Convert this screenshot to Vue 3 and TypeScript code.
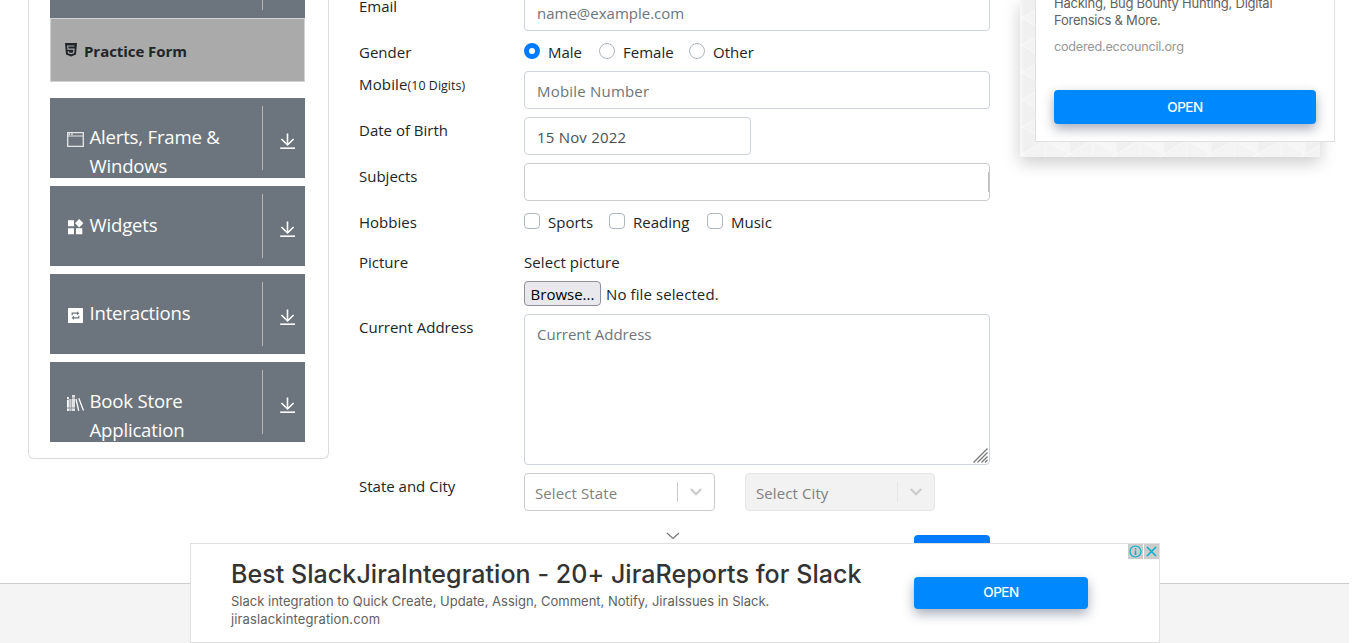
<script setup lang="ts">
interface Group {
  lines: string[]
  icon: 'window' | 'widgets' | 'repeat' | 'books'
}

const groups: Group[] = [
  { lines: ['Alerts, Frame &', 'Windows'], icon: 'window' },
  { lines: ['Widgets'], icon: 'widgets' },
  { lines: ['Interactions'], icon: 'repeat' },
  { lines: ['Book Store', 'Application'], icon: 'books' },
]
const genders = ['Male', 'Female', 'Other']
const hobbies = ['Sports', 'Reading', 'Music']
</script>

<template>
  <div class="page">
    <div class="columns">
      <aside class="sidebar">
        <div class="group-stub"><span class="divider"></span></div>
        <div class="practice">
          <svg width="12" height="14" viewBox="0 0 12 14">
            <path d="M0 0H12L11 11.5L6 13.6L1 11.5Z" fill="#212529" />
            <path d="M9.3 3H2.7L3 6.2H9L8.6 9.7L6 10.6L3.4 9.7L3.3 8.4" fill="none" stroke="#aaa" stroke-width="1.2" />
          </svg>
          <span>Practice Form</span>
        </div>
        <div v-for="g in groups" :key="g.icon" class="group">
          <div class="group-icon">
            <svg v-if="g.icon === 'window'" width="18" height="16" viewBox="0 0 18 16">
              <path d="M1.7 1.7H17.3V15.3H1.7Z" fill="none" stroke="#e4e6e8" stroke-width="1.3" />
              <path d="M1.7 5H17.3" stroke="#e4e6e8" stroke-width="1" />
              <path d="M2.5 3.2H4M5.2 3.2H6.7" stroke="#fff" stroke-width="1.2" />
            </svg>
            <svg v-else-if="g.icon === 'widgets'" width="18" height="16" viewBox="0 0 18 16">
              <path d="M2 1.3H8V7.3H2ZM2 9.3H8V15.3H2ZM10 9.3H16.3V15.3H10ZM13.2 0L17.4 4.2L13.2 8.4L9 4.2Z" fill="#fff" />
            </svg>
            <svg v-else-if="g.icon === 'repeat'" width="18" height="16" viewBox="0 0 18 16">
              <rect x="2" y="1" width="15" height="15" rx="0.6" fill="#fff" />
              <path d="M6.2 8.2V6.2H11.5M12.8 8.8V10.8H7.5" fill="none" stroke="#6c757d" stroke-width="1.2" />
              <path d="M11 4.2L13.4 6.2L11 8.2ZM8 8.8L5.6 10.8L8 12.8Z" fill="#6c757d" />
            </svg>
            <svg v-else width="18" height="16" viewBox="0 0 18 16">
              <path d="M1 2H2.8V16H1Z" fill="#fff" />
              <path d="M3.2 4H5.6V16H3.2Z" fill="#c9cdd1" />
              <path d="M6 0H9V16H6Z" fill="#e0e3e5" />
              <path d="M1 4.5H2.8M1 13H9M6 3H9" stroke="#8b9298" stroke-width="1" />
              <path d="M10 4L12.7 15.8M12.8 3.2L17.5 15.5" stroke="#fff" stroke-width="1.3" />
            </svg>
          </div>
          <div class="group-text">
            <div v-for="l in g.lines" :key="l">{{ l }}</div>
          </div>
          <span class="divider"></span>
          <svg class="arrow" width="16" height="17" viewBox="0 0 16 17">
            <path d="M7.5 0.5V12M1.4 6L7.5 12L13.6 6" fill="none" stroke="#fff" stroke-width="1.6" />
            <path d="M0.2 15.2H15" stroke="#fff" stroke-width="1.6" />
          </svg>
        </div>
      </aside>

      <main class="form">
        <div class="row h38">
          <label>Email</label>
          <div class="input muted">name@example.com</div>
        </div>
        <div class="row h24">
          <label>Gender</label>
          <div class="options genders">
            <span v-for="(g, i) in genders" :key="g" class="option">
              <i class="radio" :class="{ on: i === 0 }"></i>{{ g }}
            </span>
          </div>
        </div>
        <div class="row h38">
          <label class="mobile">Mobile<small>(10 Digits)</small></label>
          <div class="input muted wide">Mobile Number</div>
        </div>
        <div class="row h38">
          <label>Date of Birth</label>
          <div class="input date wide">15 Nov 2022</div>
        </div>
        <div class="row h38">
          <label>Subjects</label>
          <div class="input subjects"><i></i></div>
        </div>
        <div class="row h32">
          <label>Hobbies</label>
          <div class="options hobbies">
            <span v-for="h in hobbies" :key="h" class="option"><i class="check"></i>{{ h }}</span>
          </div>
        </div>
        <div class="row h57">
          <label>Picture</label>
          <div class="picture">
            <div class="picture-label">Select picture</div>
            <div class="file"><span class="browse">Browse...</span><span class="none">No file selected.</span></div>
          </div>
        </div>
        <div class="row h151">
          <label>Current Address</label>
          <div class="area">
            <span>Current Address</span>
            <svg width="15" height="15" viewBox="0 0 15 15">
              <path d="M0.5 14.5L14.5 0.5M4.5 14.5L14.5 4.5M8.5 14.5L14.5 8.5M12 14.5L14.5 12" stroke="#777" stroke-width="1.3" />
            </svg>
          </div>
        </div>
        <div class="row h38">
          <label>State and City</label>
          <div class="selects">
            <div class="select state">
              <span>Select State</span><i></i>
              <svg width="12" height="8" viewBox="0 0 12 8"><path d="M0.8 1L6 6.2L11.2 1" fill="none" stroke="#ccc" stroke-width="2.3" /></svg>
            </div>
            <div class="select city">
              <span>Select City</span><i></i>
              <svg width="12" height="8" viewBox="0 0 12 8"><path d="M0.8 1L6 6.2L11.2 1" fill="none" stroke="#ccc" stroke-width="2.3" /></svg>
            </div>
          </div>
        </div>
        <div class="submit"></div>
      </main>

      <div class="side-ad">
        <svg class="pattern" width="300" height="157">
          <defs>
            <pattern id="tri" width="47.2" height="27.25" patternUnits="userSpaceOnUse" x="1.8" y="17.75">
              <path d="M0 0L23.6 13.6L0 27.25Z" fill="#f0f0f0" />
              <path d="M47.2 0L23.6 13.6L47.2 27.25Z" fill="#f6f6f6" />
              <path d="M0 0L47.2 27.25M47.2 0L0 27.25M0 0V27.25M23.6 0V27.25" stroke="#f9f9f9" stroke-width="1" />
            </pattern>
          </defs>
          <rect width="300" height="157" fill="#f3f3f3" />
          <rect width="300" height="157" fill="url(#tri)" />
        </svg>
        <div class="side-card">
          <div class="side-copy">Hacking, Bug Bounty Hunting, Digital<br />Forensics &amp; More.</div>
          <div class="side-url">codered.eccouncil.org</div>
          <div class="open">OPEN</div>
        </div>
      </div>
    </div>

    <footer></footer>

    <div class="banner">
      <svg class="collapse" width="14" height="8" viewBox="0 0 14 8"><path d="M1 1L7 6.5L13 1" fill="none" stroke="#777" stroke-width="1.2" /></svg>
      <div class="banner-copy">
        <div class="title">Best SlackJiraIntegration - 20+ JiraReports for Slack</div>
        <div class="desc">Slack integration to Quick Create, Update, Assign, Comment, Notify, JiraIssues in Slack.</div>
        <div class="desc site">jiraslackintegration.com</div>
      </div>
      <div class="open">OPEN</div>
      <div class="choices">
        <svg width="15" height="15" viewBox="0 0 15 15">
          <circle cx="7.5" cy="7.5" r="5.5" fill="none" stroke="#00aecd" stroke-width="1.2" />
          <path d="M7.5 6.5V11M7.5 4V5.4" stroke="#00aecd" stroke-width="1.5" />
        </svg>
        <svg width="15" height="15" viewBox="0 0 15 15"><path d="M3 3L12 12M12 3L3 12" stroke="#00aecd" stroke-width="1.5" /></svg>
      </div>
    </div>
  </div>
</template>

<style>
body {
  margin: 0;
}
</style>

<style scoped>
.page {
  position: relative;
  width: 1366px;
  height: 643px;
  overflow: hidden;
  background: #fff;
  color: #212529;
  font: 15px/24px "Open Sans", "Noto Sans", sans-serif;
  white-space: nowrap;
}
.page * {
  box-sizing: border-box;
}
.columns {
  display: flex;
  height: 583px;
}
.sidebar {
  width: 301px;
  height: 459px;
  margin-left: 28px;
  padding: 0 23px 0 21px;
  border: 1px solid #dcdcdc;
  border-top: 0;
  border-radius: 0 0 6px 6px;
}
.group-stub {
  display: flex;
  height: 18px;
  padding-left: 212px;
  background: #6c757d;
}
.group-stub .divider {
  height: 10px;
  margin: 0;
}
.practice {
  display: flex;
  align-items: center;
  gap: 7px;
  height: 64px;
  margin-bottom: 16px;
  padding: 2px 0 0 14px;
  border: 1px solid #cfd3d6;
  background: #aaa;
  font-weight: 700;
}
.practice svg {
  margin-top: -3px;
}
.practice span {
  letter-spacing: -0.05px;
}
.group {
  display: flex;
  height: 80px;
  margin-bottom: 8px;
  overflow: hidden;
  background: #6c757d;
  color: #fff;
}
.group-icon {
  width: 39px;
  padding: 33px 0 0 16px;
}
.group-icon svg {
  display: block;
}
.group-text {
  width: 173px;
  padding: 24px 0 0 0.5px;
  font-size: 18.6px;
  letter-spacing: -0.2px;
  line-height: 29px;
}
.divider {
  width: 1px;
  height: 64px;
  margin-top: 8px;
  background: #b5b5b5;
}
.arrow {
  margin: 35px 0 0 17px;
}
.form {
  display: flex;
  flex-direction: column;
  gap: 8px;
  width: 631px;
  margin: -7px 0 0 30px;
}
.row {
  display: grid;
  flex: none;
  grid-template-columns: 165px 466px;
}
.h24 { height: 24px; }
.h32 { height: 32px; }
.h38 { height: 38px; }
.h57 { height: 57px; }
.h151 { height: 151px; }
label {
  padding-top: 1px;
}
.mobile {
  letter-spacing: 0.15px;
}
small {
  font-size: 12.4px;
  letter-spacing: 0.05px;
}
.input {
  height: 38px;
  padding: 7px 12px;
  border: 1px solid #ced4da;
  border-radius: 4px;
  color: #495057;
}
.muted {
  color: #6c757d;
}
.wide {
  letter-spacing: 0.2px;
}
.date {
  width: 227px;
}
.subjects {
  display: flex;
  justify-content: flex-end;
  padding: 8px 0;
  border-color: #ccc;
}
.subjects i {
  width: 1px;
  height: 20px;
  background: #bbb;
}
.options {
  display: flex;
  height: 24px;
  padding-top: 1px;
}
.option {
  display: flex;
  flex: none;
  align-items: flex-start;
  gap: 8px;
}
.genders .option:nth-child(1) { width: 75px; }
.genders .option:nth-child(2) { width: 90px; }
.hobbies .option:nth-child(1) { width: 85px; }
.hobbies .option:nth-child(2) { width: 98px; }
.radio,
.check {
  width: 16px;
  height: 16px;
  margin-top: 3px;
  border: 1px solid #adb5bd;
  border-radius: 50%;
}
.check {
  border-radius: 4px;
}
.radio.on {
  border: 5px solid #007bff;
}
.picture-label {
  height: 32px;
  padding-top: 1px;
  letter-spacing: 0.08px;
}
.file {
  display: flex;
  align-items: center;
  gap: 5px;
  height: 25px;
}
.none {
  letter-spacing: 0.1px;
}
.browse {
  width: 77px;
  height: 25px;
  border: 1px solid #8f8f9d;
  border-radius: 4px;
  background: #e9e9ed;
  color: #000;
  line-height: 24px;
  text-align: center;
}
.area {
  display: flex;
  align-items: flex-end;
  justify-content: space-between;
  padding: 0 1px 1px 12px;
  border: 1px solid #ced4da;
  border-radius: 4px;
  color: #6c757d;
}
.area span {
  align-self: flex-start;
  padding-top: 7px;
}
.selects {
  display: flex;
  gap: 30px;
}
.select {
  display: flex;
  align-items: center;
  height: 38px;
  padding: 0 12px 0 10px;
  border: 1px solid #ccc;
  border-radius: 4px;
  color: #808080;
  letter-spacing: 0.1px;
}
.state { width: 191px; }
.city {
  width: 190px;
  border-color: #e6e6e6;
  background: #f2f2f2;
}
.select span {
  flex: 1;
  padding-top: 2px;
}
.select i {
  width: 1px;
  height: 20px;
  margin-right: 12px;
  background: #ccc;
}
.city i {
  background: #e6e6e6;
}
.submit {
  align-self: flex-end;
  width: 76px;
  height: 38px;
  margin-top: 16px;
  border-radius: 4px;
  background: #007bff;
}
.side-ad {
  position: relative;
  width: 300px;
  height: 157px;
  margin-left: 30px;
  box-shadow: 0 6px 16px rgba(0, 0, 0, 0.2);
  font-family: Inter, sans-serif;
}
.pattern {
  display: block;
}
.side-card {
  position: absolute;
  left: 15px;
  top: 0;
  width: 300px;
  height: 142px;
  padding: 0 18px;
  border: 1px solid #e0e0e0;
  border-top: 0;
  background: #fff;
}
.side-copy {
  margin-top: -5px;
  color: #616161;
  font-size: 13px;
  letter-spacing: -0.23px;
  line-height: 17px;
}
.side-url {
  margin: 9px 0 35px;
  color: #979797;
  font-size: 12.7px;
  letter-spacing: -0.25px;
  line-height: 17px;
}
.open {
  height: 34px;
  border-radius: 4px;
  background: #0088ff;
  box-shadow: 0 5px 12px rgba(40, 50, 80, 0.4);
  color: #fff;
  font-size: 13.5px;
  font-weight: 500;
  letter-spacing: -0.5px;
  line-height: 34px;
  text-align: center;
}
footer {
  width: 1349px;
  height: 60px;
  border-top: 1px solid #ccc;
  background: #f4f4f4;
}
.banner {
  position: absolute;
  left: 190px;
  top: 543px;
  display: flex;
  width: 970px;
  height: 100px;
  border: 1px solid #e0e0e0;
  background: #fff;
  font-family: Inter, sans-serif;
}
.collapse {
  position: absolute;
  left: 475px;
  top: -12px;
}
.banner-copy {
  width: 723px;
  padding: 13px 0 0 40px;
}
.title {
  color: #333;
  font-size: 25px;
  font-weight: 500;
  letter-spacing: 0.06px;
  line-height: 34px;
}
.desc {
  margin-top: 1px;
  color: #616161;
  font-size: 13px;
  line-height: 18px;
}
.site {
  margin-top: 0;
  letter-spacing: 0.12px;
}
.banner .open {
  width: 174px;
  height: 32px;
  margin-top: 33px;
  line-height: 31px;
}
.choices {
  position: absolute;
  right: 0;
  top: 0;
  display: flex;
  gap: 1px;
}
.choices svg {
  background: #ccc;
}
</style>
